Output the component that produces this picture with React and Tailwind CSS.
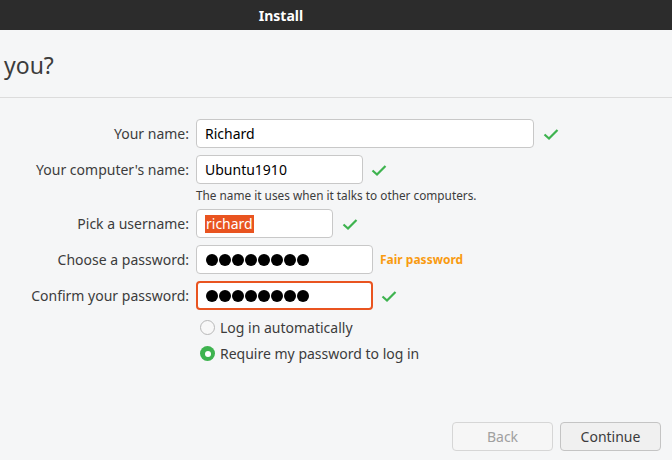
import React from 'react';

const font = { fontFamily: '"Noto Sans", "Open Sans", sans-serif' };

const Check = () => (
    <svg width="18" height="18" viewBox="0 0 18 18" className="shrink-0">
        <path d="M2.5 9.5 L7 13.5 L15.5 5" fill="none" stroke="#3eb34f" strokeWidth="2.2" />
    </svg>
);

const Dots = () => (
    <span className="flex gap-[1px]">
        {Array.from({ length: 8 }).map((_, i) => (
            <span key={i} className="block w-[12px] h-[12px] rounded-full bg-black" />
        ))}
    </span>
);

const Row = ({ label, children, className = '' }) => (
    <div className={`flex items-center ${className}`}>
        <div className="w-[196px] pr-[7px] text-right text-[14px] text-[#3c3c3c]">{label}</div>
        {children}
    </div>
);

const App = () => {
    return (
        <div className="w-[672px] h-[460px] bg-[#f5f6f7] flex flex-col overflow-hidden" style={font}>
            <div className="h-[30px] bg-[#2c2c2c] flex items-center justify-center">
                <span className="text-white text-[14px] font-bold -translate-x-[55px]">Install</span>
            </div>

            <div className="h-[68px] border-b border-[#dcdcdc] flex items-center pl-[4px]">
                <span className="text-[23px] text-[#3c3c3c] mt-[4px]">you?</span>
            </div>

            <div className="flex flex-col pt-[21px]">
                <Row label="Your name:">
                    <div className="w-[338px] h-[29px] bg-white border border-[#c8c8c8] rounded-[4px] flex items-center px-[8px] text-[14px] text-black">Richard</div>
                    <span className="ml-[8px]"><Check /></span>
                </Row>
                <Row label="Your computer's name:" className="mt-[7px]">
                    <div className="w-[167px] h-[29px] bg-white border border-[#c8c8c8] rounded-[4px] flex items-center px-[8px] text-[14px] text-black">Ubuntu1910</div>
                    <span className="ml-[7px]"><Check /></span>
                </Row>
                <div className="pl-[196px] text-[11.8px] text-[#3c3c3c] mt-[3px] leading-[16px]">The name it uses when it talks to other computers.</div>
                <Row label="Pick a username:" className="mt-[6px]">
                    <div className="w-[137px] h-[29px] bg-white border border-[#c8c8c8] rounded-[4px] flex items-center px-[8px] text-[14px]">
                        <span className="bg-[#e95420] text-white leading-[18px] px-[1px]">richard</span>
                    </div>
                    <span className="ml-[8px]"><Check /></span>
                </Row>
                <Row label="Choose a password:" className="mt-[7px]">
                    <div className="w-[177px] h-[29px] bg-white border border-[#c8c8c8] rounded-[4px] flex items-center px-[9px]">
                        <Dots />
                    </div>
                    <span className="ml-[7px] text-[12px] font-bold text-[#f99b11]">Fair password</span>
                </Row>
                <Row label="Confirm your password:" className="mt-[7px]">
                    <div className="w-[177px] h-[29px] bg-white border-[2px] border-[#e95420] rounded-[4px] flex items-center px-[8px]">
                        <Dots />
                    </div>
                    <span className="ml-[7px]"><Check /></span>
                </Row>

                <div className="pl-[200px] mt-[7px] flex flex-col gap-[5px] text-[14px] text-[#3c3c3c]">
                    <div className="flex items-center gap-[5px]">
                        <span className="w-[15px] h-[15px] rounded-full border border-[#b8b8b8] bg-[#f8f8f8]" />
                        <span>Log in automatically</span>
                    </div>
                    <div className="flex items-center gap-[5px]">
                        <span className="w-[15px] h-[15px] rounded-full bg-[#3eb34f] flex items-center justify-center">
                            <span className="w-[6px] h-[6px] rounded-full bg-white" />
                        </span>
                        <span>Require my password to log in</span>
                    </div>
                </div>
            </div>

            <div className="mt-auto mb-[9px] flex justify-end gap-[7px] pr-[11px]">
                <button className="w-[101px] h-[29px] rounded-[4px] border border-[#d6d6d6] bg-[#f6f6f6] text-[14px] text-[#a0a0a0]">Back</button>
                <button className="w-[101px] h-[29px] rounded-[4px] border border-[#c4c4c4] bg-[#f0f0f0] text-[14px] text-[#3c3c3c]">Continue</button>
            </div>
        </div>
    );
};

export default App;
